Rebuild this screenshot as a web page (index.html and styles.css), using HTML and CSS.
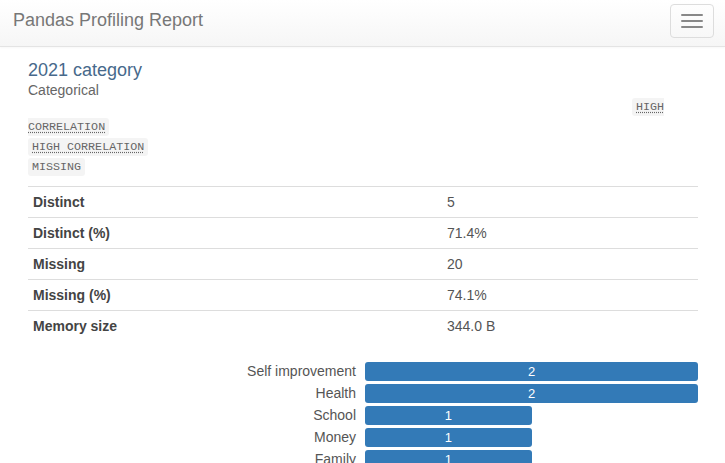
FILE: index.html
```html
<!DOCTYPE html>
<html>
<head>
<meta charset="utf-8">
<title>Pandas Profiling Report</title>
<link rel="stylesheet" href="styles.css">
</head>
<body>
<nav class="navbar">
  <span class="brand">Pandas Profiling Report</span>
  <button class="toggle" type="button" aria-label="Toggle navigation">
    <span class="bar"></span><span class="bar"></span><span class="bar"></span>
  </button>
</nav>
<main class="content">
  <h3 class="var-name">2021 category</h3>
  <div class="var-type">Categorical</div>
  <div class="badges"><code class="badge"><abbr>HIGH CORRELATION</abbr></code><br><code class="badge"><abbr>HIGH CORRELATION</abbr></code><br><code class="badge">MISSING</code></div>
  <table class="stats">
    <tr><th>Distinct</th><td>5</td></tr>
    <tr><th>Distinct (%)</th><td>71.4%</td></tr>
    <tr><th>Missing</th><td>20</td></tr>
    <tr><th>Missing (%)</th><td>74.1%</td></tr>
    <tr><th>Memory size</th><td>344.0 B</td></tr>
  </table>
  <div class="chart">
    <div class="label">Self improvement</div><div class="track"><div class="fill" style="width:100%">2</div></div>
    <div class="label">Health</div><div class="track"><div class="fill" style="width:100%">2</div></div>
    <div class="label">School</div><div class="track"><div class="fill" style="width:50%">1</div></div>
    <div class="label">Money</div><div class="track"><div class="fill" style="width:50%">1</div></div>
    <div class="label">Family</div><div class="track"><div class="fill" style="width:50%">1</div></div>
  </div>
</main>
</body>
</html>
```
FILE: styles.css
```css
html, body {
  margin: 0;
  padding: 0;
  background: #fff;
  height: 463px;
  overflow: hidden;
}
body {
  font-family: "Liberation Sans", Arial, sans-serif;
  font-size: 14px;
  color: #555;
}
.navbar {
  height: 46px;
  border-bottom: 1px solid #e4e4e4;
  background: linear-gradient(to bottom, #ffffff 0%, #f6f6f6 100%);
  display: flex;
  align-items: flex-start;
  justify-content: space-between;
  box-shadow: 0 1px 2px rgba(0,0,0,0.03);
}
.brand {
  padding: 10px 0 0 13px;
  font-size: 18px;
  line-height: 20px;
  color: #777;
}
.toggle {
  margin: 4px 11px 0 0;
  width: 44px;
  height: 34px;
  border: 1px solid #ddd;
  border-radius: 4px;
  background: transparent;
  display: flex;
  flex-direction: column;
  align-items: center;
  justify-content: center;
  gap: 4px;
  padding: 0;
}
.toggle .bar {
  display: block;
  width: 22px;
  height: 2px;
  border-radius: 1px;
  background: #888;
}
.content {
  padding: 0 27px 0 28px;
}
.var-name {
  margin: 11px 0 0;
  font-size: 18px;
  font-weight: normal;
  line-height: 24px;
  color: #47698b;
}
.var-type {
  font-size: 14px;
  line-height: 16px;
  color: #666;
}
.badges {
  margin-top: -1px;
  font-family: "Liberation Mono", "Courier New", monospace;
  font-size: 11.7px;
  line-height: 20px;
  text-indent: 604px;
}
.badge {
  font-family: inherit;
  font-size: inherit;
  padding: 2px 4px;
  background: #f4f4f4;
  color: #666;
  border-radius: 3px;
}
.badge abbr {
  text-decoration: underline dotted;
  text-underline-offset: 2px;
  cursor: help;
}
.stats {
  margin-top: 9px;
  width: 100%;
  border-collapse: collapse;
  font-size: 14px;
}
.stats tr {
  border-top: 1px solid #ddd;
}
.stats th, .stats td {
  height: 30px;
  padding: 0 5px;
  text-align: left;
  vertical-align: middle;
}
.stats th {
  width: 404px;
  font-weight: bold;
  color: #444;
}
.stats td {
  color: #555;
}
.chart {
  margin-top: 21px;
  display: grid;
  grid-template-columns: 1fr 333px;
  column-gap: 9px;
  row-gap: 3px;
}
.label {
  text-align: right;
  font-size: 14px;
  line-height: 19px;
  color: #555;
}
.track {
  height: 19px;
}
.fill {
  height: 19px;
  background: #337ab7;
  border-radius: 3px;
  color: #fff;
  font-size: 13px;
  line-height: 19px;
  text-align: center;
}
```
